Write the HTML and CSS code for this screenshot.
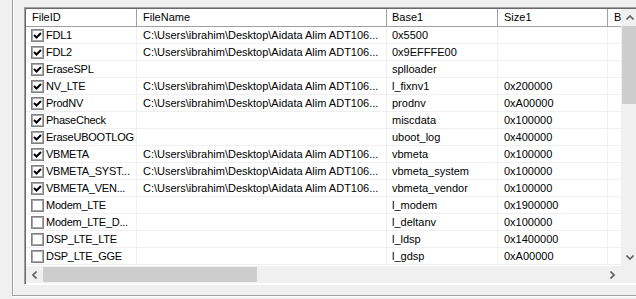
FILE: index.html
```html
<!DOCTYPE html>
<html>
<head>
<meta charset="utf-8">
<link rel="stylesheet" href="styles.css">
</head>
<body>
<div class="group">
  <div class="lv">
    <div class="list">
      <div class="hdr">
        <div class="c c1">FileID</div>
        <div class="c c2">FileName</div>
        <div class="c c3">Base1</div>
        <div class="c c4">Size1</div>
        <div class="c c5">Ba</div>
      </div>
      <div class="row"><div class="c c1"><span class="cb on"><svg viewBox="0 0 9 9"><path d="M1 4 L3.5 6.5 L8 2"/></svg></span>FDL1</div><div class="c c2">C:\Users\ibrahim\Desktop\Aidata Alim ADT106...</div><div class="c c3">0x5500</div><div class="c c4"></div><div class="c c5"></div></div>
      <div class="row"><div class="c c1"><span class="cb on"><svg viewBox="0 0 9 9"><path d="M1 4 L3.5 6.5 L8 2"/></svg></span>FDL2</div><div class="c c2">C:\Users\ibrahim\Desktop\Aidata Alim ADT106...</div><div class="c c3">0x9EFFFE00</div><div class="c c4"></div><div class="c c5"></div></div>
      <div class="row"><div class="c c1"><span class="cb on"><svg viewBox="0 0 9 9"><path d="M1 4 L3.5 6.5 L8 2"/></svg></span>EraseSPL</div><div class="c c2"></div><div class="c c3">splloader</div><div class="c c4"></div><div class="c c5"></div></div>
      <div class="row"><div class="c c1"><span class="cb on"><svg viewBox="0 0 9 9"><path d="M1 4 L3.5 6.5 L8 2"/></svg></span>NV_LTE</div><div class="c c2">C:\Users\ibrahim\Desktop\Aidata Alim ADT106...</div><div class="c c3">l_fixnv1</div><div class="c c4">0x200000</div><div class="c c5"></div></div>
      <div class="row"><div class="c c1"><span class="cb on"><svg viewBox="0 0 9 9"><path d="M1 4 L3.5 6.5 L8 2"/></svg></span>ProdNV</div><div class="c c2">C:\Users\ibrahim\Desktop\Aidata Alim ADT106...</div><div class="c c3">prodnv</div><div class="c c4">0xA00000</div><div class="c c5"></div></div>
      <div class="row"><div class="c c1"><span class="cb on"><svg viewBox="0 0 9 9"><path d="M1 4 L3.5 6.5 L8 2"/></svg></span>PhaseCheck</div><div class="c c2"></div><div class="c c3">miscdata</div><div class="c c4">0x100000</div><div class="c c5"></div></div>
      <div class="row"><div class="c c1"><span class="cb on"><svg viewBox="0 0 9 9"><path d="M1 4 L3.5 6.5 L8 2"/></svg></span>EraseUBOOTLOG</div><div class="c c2"></div><div class="c c3">uboot_log</div><div class="c c4">0x400000</div><div class="c c5"></div></div>
      <div class="row"><div class="c c1"><span class="cb on"><svg viewBox="0 0 9 9"><path d="M1 4 L3.5 6.5 L8 2"/></svg></span>VBMETA</div><div class="c c2">C:\Users\ibrahim\Desktop\Aidata Alim ADT106...</div><div class="c c3">vbmeta</div><div class="c c4">0x100000</div><div class="c c5"></div></div>
      <div class="row"><div class="c c1"><span class="cb on"><svg viewBox="0 0 9 9"><path d="M1 4 L3.5 6.5 L8 2"/></svg></span>VBMETA_SYST...</div><div class="c c2">C:\Users\ibrahim\Desktop\Aidata Alim ADT106...</div><div class="c c3">vbmeta_system</div><div class="c c4">0x100000</div><div class="c c5"></div></div>
      <div class="row"><div class="c c1"><span class="cb on"><svg viewBox="0 0 9 9"><path d="M1 4 L3.5 6.5 L8 2"/></svg></span>VBMETA_VEN...</div><div class="c c2">C:\Users\ibrahim\Desktop\Aidata Alim ADT106...</div><div class="c c3">vbmeta_vendor</div><div class="c c4">0x100000</div><div class="c c5"></div></div>
      <div class="row"><div class="c c1"><span class="cb"></span>Modem_LTE</div><div class="c c2"></div><div class="c c3">l_modem</div><div class="c c4">0x1900000</div><div class="c c5"></div></div>
      <div class="row"><div class="c c1"><span class="cb"></span>Modem_LTE_D...</div><div class="c c2"></div><div class="c c3">l_deltanv</div><div class="c c4">0x100000</div><div class="c c5"></div></div>
      <div class="row"><div class="c c1"><span class="cb"></span>DSP_LTE_LTE</div><div class="c c2"></div><div class="c c3">l_ldsp</div><div class="c c4">0x1400000</div><div class="c c5"></div></div>
      <div class="row"><div class="c c1"><span class="cb"></span>DSP_LTE_GGE</div><div class="c c2"></div><div class="c c3">l_gdsp</div><div class="c c4">0xA00000</div><div class="c c5"></div></div>
    </div>
    <div class="vscroll">
      <div class="arrow"><svg viewBox="0 0 8 5"><path d="M0.5 4.5 L4 1 L7.5 4.5"/></svg></div>
      <div class="vtrack"><div class="vthumb"></div></div>
      <div class="arrow"><svg viewBox="0 0 8 5"><path d="M0.5 0.5 L4 4 L7.5 0.5"/></svg></div>
    </div>
    <div class="hscroll">
      <div class="arrow"><svg class="hs" viewBox="0 0 5 8"><path d="M4.5 0.5 L1 4 L4.5 7.5"/></svg></div>
      <div class="htrack"><div class="hthumb"></div></div>
      <div class="arrow"><svg class="hs" viewBox="0 0 5 8"><path d="M0.5 0.5 L4 4 L0.5 7.5"/></svg></div>
    </div>
    <div class="corner"></div>
  </div>
</div>
</body>
</html>
```

FILE: styles.css
```css
html, body {
  margin: 0;
  padding: 0;
}
body {
  background: #f0f0f0;
  width: 636px;
  height: 299px;
  overflow: hidden;
  font-family: "Liberation Sans", Arial, sans-serif;
  font-size: 11px;
  color: #000;
  padding-left: 12px;
  box-sizing: border-box;
}
.group {
  width: 700px;
  border-left: 1px solid #a0a0a0;
  border-bottom: 1px solid #a0a0a0;
  box-shadow: 1px 1px 0 #ffffff, inset 1px 0 0 #ffffff;
  padding: 7px 0 10px 11px;
}
.lv {
  width: 614px;
  border-top: 1px solid #a0a0a0;
  border-left: 1px solid #a0a0a0;
  border-bottom: 1px solid #ffffff;
  box-shadow: inset 1px 1px 0 #696969;
  padding: 1px 0 1px 1px;
  background: #fff;
  display: grid;
  grid-template-columns: 595px 17px;
  grid-template-rows: 257px 17px;
}
.list {
  background: #fff;
  overflow: hidden;
}
.hdr {
  display: flex;
  height: 17px;
  border-bottom: 1px solid #a0a0a0;
  background: #fff;
}
.hdr .c {
  border-right: 1px solid #a0a0a0;
  line-height: 17px;
  padding-left: 6px;
}
.row {
  display: flex;
  height: 16px;
  border-bottom: 1px solid #f0f0f0;
}
.row .c {
  border-right: 1px solid #f0f0f0;
  line-height: 16px;
  padding-left: 6px;
}
.c {
  box-sizing: border-box;
  white-space: nowrap;
  overflow: hidden;
  flex: none;
}
.c1 { width: 111px; }
.c2 { width: 250px; }
.c3 { width: 111px; padding-left: 5px !important; }
.c4 { width: 110px; }
.c5 { width: 60px; }
.row .c1 {
  display: flex;
  align-items: center;
  padding-left: 5px;
  letter-spacing: -0.25px;
}
.cb {
  width: 13px;
  height: 13px;
  box-sizing: border-box;
  border: 1px solid #808080;
  box-shadow: inset 0 0 0 1px #a8a8a8;
  background: #fff;
  margin-right: 2px;
  display: flex;
  align-items: center;
  justify-content: center;
  flex: none;
}
.cb svg {
  width: 9px;
  height: 9px;
}
.cb path {
  fill: none;
  stroke: #000;
  stroke-width: 2;
}
.vscroll {
  background: #f0f0f0;
  display: flex;
  flex-direction: column;
}
.hscroll {
  background: #f0f0f0;
  display: flex;
}
.corner {
  background: #f0f0f0;
}
.arrow {
  width: 17px;
  height: 17px;
  flex: none;
  display: flex;
  align-items: center;
  justify-content: center;
}
.arrow svg {
  width: 8px;
  height: 5px;
}
.arrow svg.hs {
  width: 5px;
  height: 8px;
}
.arrow path {
  fill: none;
  stroke: #606060;
  stroke-width: 1.6;
}
.vtrack {
  flex: 1;
  display: flex;
  flex-direction: column;
}
.vthumb {
  height: 78px;
  background: #cdcdcd;
  margin-left: 1px;
  margin-right: 1px;
}
.htrack {
  flex: 1;
  display: flex;
}
.hthumb {
  width: 214px;
  background: #cdcdcd;
  margin-top: 1px;
  margin-bottom: 1px;
}
```
